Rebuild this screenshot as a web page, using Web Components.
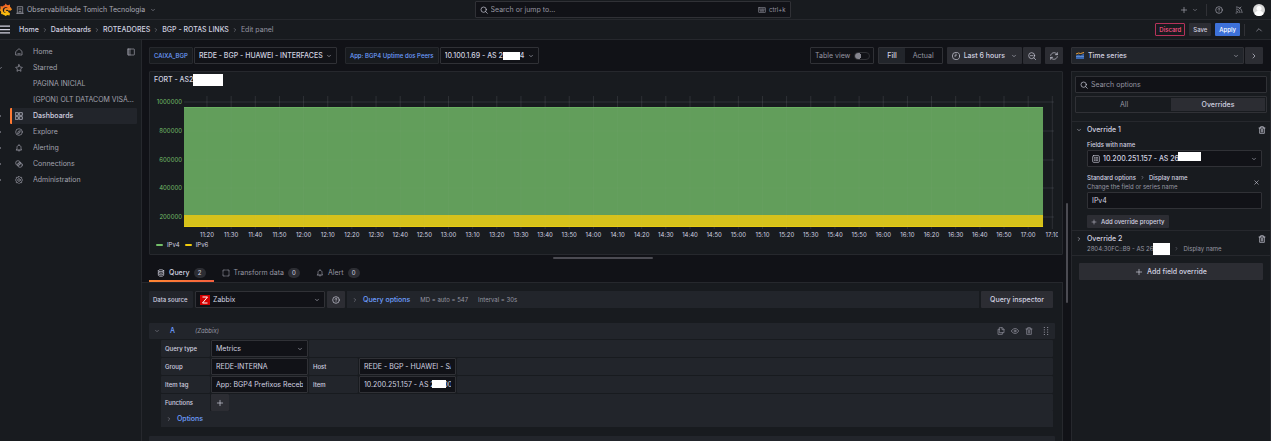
<!DOCTYPE html>
<html lang="pt-BR">
<head>
<meta charset="utf-8">
<title>Edit panel - BGP - ROTAS LINKS</title>
<style>
    html {
        --canvas: #111217;
        --primary: #181b1f;
        --secondary: #22252b;
        --raised: #2c2d33;
        --line: #26282d;
        --input-line: #303136;
        --text: #d2d2e0;
        --text-dim: #9696a2;
        --link: #6e9fff;
        background: var(--canvas);
    }

    body {
        margin: 0;
        font: 7px/10px Inter, sans-serif;
        color: var(--text);
    }
</style>
</head>
<body>
<grafana-app></grafana-app>

<template id="tpl-icon">
    <style>
        :host { display: inline-flex; flex: none; width: 8px; height: 8px; }
        svg { width: 100%; height: 100%; fill: none; stroke: currentColor; stroke-width: 2; stroke-linecap: round; stroke-linejoin: round; }
    </style>
    <svg viewBox="0 0 24 24" aria-hidden="true"></svg>
</template>

<template id="tpl-button">
    <style>
        :host { display: inline-flex; color: var(--text); }
        button {
            flex: 1;
            display: flex;
            align-items: center;
            justify-content: center;
            gap: 4px;
            box-sizing: border-box;
            min-height: 17px;
            margin: 0;
            padding: 0 5px;
            border: 0;
            border-radius: 1px;
            background: var(--raised);
            color: inherit;
            font: inherit;
            font-weight: 500;
            white-space: nowrap;
            cursor: pointer;
        }
        :host([small]) button { min-height: 13px; padding: 0 4px; font-size: 6px; }
        :host([plain]) { color: inherit; }
        :host([plain]) button { min-height: 0; padding: 0; background: none; }
        :host([tone="primary"]) button { background: #3d71d9; color: #fff; }
        :host([tone="danger"]) button { border: 1px solid #b5325a; padding: 0 3px; background: none; color: #ff5286; }
    </style>
    <button type="button"><slot></slot></button>
</template>

<template id="tpl-field">
    <style>
        :host { display: flex; gap: 1px; }
        label {
            flex: none;
            display: flex;
            align-items: center;
            box-sizing: border-box;
            width: var(--label-width, auto);
            padding: 0 4px;
            background: var(--label-background, var(--secondary));
            border: var(--label-border, 0);
            border-radius: 1px;
            color: var(--label-color, inherit);
            font-size: 6px;
            font-weight: 500;
            white-space: nowrap;
        }
        label:empty { display: none; }
        .box {
            flex: 1;
            position: relative;
            display: flex;
            align-items: center;
            gap: 3px;
            box-sizing: border-box;
            min-width: 0;
            height: 17px;
            padding: 0 4px;
            border: 1px solid var(--input-line);
            border-radius: 1px;
            background: var(--canvas);
        }
        .control {
            flex: 1;
            min-width: 0;
            margin: 0;
            padding: 0;
            border: 0;
            outline: 0;
            appearance: none;
            background: none;
            color: inherit;
            font: inherit;
            font-weight: var(--control-weight, 400);
        }
        .control::placeholder { color: var(--text-dim); opacity: 1; }
        ::slotted(.mask) {
            position: absolute;
            background: #fff;
        }
        .arrow { width: 6px; height: 6px; pointer-events: none; }
    </style>
    <label for="control"></label>
    <div class="box"><slot name="prefix"></slot><slot></slot></div>
</template>

<template id="tpl-nav-item">
    <style>
        :host { display: block; }
        a {
            display: grid;
            grid-template-columns: 10px 18px 1fr auto;
            align-items: center;
            height: 16px;
            color: #a2a2ae;
            text-decoration: none;
        }
        .caret { width: 6px; height: 6px; margin-left: -3px; color: var(--text); }
        .body {
            grid-column: 2 / 5;
            display: flex;
            align-items: center;
            gap: 10px;
            height: 16px;
            min-width: 0;
            padding-left: 5px;
            box-sizing: border-box;
        }
        .text { flex: 1; overflow: hidden; text-overflow: ellipsis; white-space: nowrap; }
        :host([child]) .body { padding-left: 23px; }
        :host([active]) .body {
            padding-left: 3px;
            border-left: 2px solid #ff7a33;
            border-radius: 1px;
            background: var(--secondary);
            color: var(--text);
            font-weight: 500;
        }
    </style>
    <a href="#"><span class="caret"></span><span class="body"><span class="text"><slot></slot></span><slot name="end"></slot></span></a>
</template>

<template id="tpl-header">
    <style>
        :host { display: block; background: var(--primary); }
        .row {
            display: grid;
            align-items: center;
            box-sizing: border-box;
            height: 20px;
            border-bottom: 1px solid var(--line);
        }
        .top { grid-template-columns: 1fr 316px 1fr; padding-right: 6px; }
        .crumbs { grid-template-columns: 1fr auto; padding-right: 8px; }
        .org, .end, nav { display: flex; align-items: center; }
        .org { gap: 3px; color: #a9a9b5; }
        .logo { width: 12px; height: 13px; margin-right: 1px; }
        .org .arrow, .arrow { width: 6px; height: 6px; }
        .org .arrow { margin-left: 2px; }
        .end { justify-content: flex-end; color: #a9a9b5; }
        .top .end { gap: 12px; }
        .tools { display: flex; align-items: center; gap: 8px; }
        .rule { width: 1px; height: 12px; background: var(--input-line); }
        .avatar { width: 12px; height: 12px; margin-left: -2px; }
        kbd { display: flex; align-items: center; gap: 3px; font: inherit; font-size: 6px; color: var(--text-dim); }
        nav { gap: 3px; color: var(--text-dim); }
        nav ui-icon { width: 6px; height: 6px; }
        nav a { color: var(--text); font-weight: 500; text-decoration: none; }
        nav .menu { width: 10px; height: 11px; margin-right: 6px; color: var(--text); }
        .crumbs .end { gap: 4px; }
        .crumbs .end > ui-button:last-child { margin-left: 6px; }
    </style>
    <div class="row top">
        <div class="org">
            <svg class="logo" viewBox="0 0 24 26" aria-label="Grafana">
                <defs><linearGradient id="flame" x1="0" y1="1" x2="0" y2="0"><stop offset="0" stop-color="#fbca0a"/><stop offset="1" stop-color="#f05a28"/></linearGradient></defs>
                <path fill="none" stroke="url(#flame)" stroke-width="4" stroke-linejoin="round" d="M18 19c-3 4-9 4-12 1-4-4-3-11 2-13 6-3 13 1 13 7M19 15c-1-4-8-5-9-1-1 4 4 5 5 2"/>
                <path fill="url(#flame)" d="M9 6l2-5 4 4 5-2v6l4 3-3 4-2-5-6-3zM5 7L1 6v5l-1 4 3 3-1 4 5 1 4 3 4-2 4 1 1-5-5 1-8 1-5-6z"/>
            </svg>
            <ui-icon name="building"></ui-icon>
            <span>Observabilidade Tomich Tecnologia</span>
            <ui-icon class="arrow" name="down"></ui-icon>
        </div>
        <ui-field type="text" placeholder="Search or jump to..." aria="Search or jump to">
            <ui-icon slot="prefix" name="search"></ui-icon>
            <kbd><ui-icon name="keyboard"></ui-icon>ctrl+k</kbd>
        </ui-field>
        <div class="end">
            <div class="tools">
                <ui-button plain aria="New"><ui-icon name="plus"></ui-icon><ui-icon class="arrow" name="down"></ui-icon></ui-button>
                <span class="rule"></span>
                <ui-button plain aria="Help"><ui-icon name="help"></ui-icon></ui-button>
            </div>
            <ui-button plain aria="News"><ui-icon name="rss"></ui-icon></ui-button>
            <svg class="avatar" viewBox="0 0 24 24"><circle cx="12" cy="12" r="12" fill="#d8d8d8"/><circle cx="12" cy="9" r="5" fill="#fff"/><path fill="#fff" d="M3 20c1-5 5-6 9-6s8 1 9 6a12 12 0 0 1-18 0z"/></svg>
        </div>
    </div>
    <div class="row crumbs">
        <nav aria-label="Breadcrumbs">
            <ui-button plain aria="Menu"><ui-icon class="menu" name="bars"></ui-icon></ui-button>
            <a href="#">Home</a><ui-icon name="right"></ui-icon>
            <a href="#">Dashboards</a><ui-icon name="right"></ui-icon>
            <a href="#">ROTEADORES</a><ui-icon name="right"></ui-icon>
            <a href="#">BGP - ROTAS LINKS</a><ui-icon name="right"></ui-icon>
            <span>Edit panel</span>
        </nav>
        <div class="end">
            <ui-button small tone="danger">Discard</ui-button>
            <ui-button small>Save</ui-button>
            <ui-button small tone="primary">Apply</ui-button>
            <span class="rule"></span>
            <ui-button plain aria="Collapse"><ui-icon name="up"></ui-icon></ui-button>
        </div>
    </div>
</template>

<template id="tpl-side-nav">
    <style>
        :host { display: block; box-sizing: border-box; padding: 4px 4px 0 0; border-right: 1px solid var(--line); background: var(--primary); }
        .dock { margin-right: 2px; }
    </style>
    <nav aria-label="Main">
        <nav-item icon="home">Home<ui-icon slot="end" class="dock" name="dock"></ui-icon></nav-item>
        <nav-item icon="star" caret="down">Starred</nav-item>
        <nav-item child>PAGINA INICIAL</nav-item>
        <nav-item child>[GPON] OLT DATACOM VISÃO GERAL</nav-item>
        <nav-item icon="apps" caret="right" active>Dashboards</nav-item>
        <nav-item icon="compass" caret="right">Explore</nav-item>
        <nav-item icon="bell" caret="right">Alerting</nav-item>
        <nav-item icon="link" caret="right">Connections</nav-item>
        <nav-item icon="cog" caret="right">Administration</nav-item>
    </nav>
</template>

<template id="tpl-toolbar">
    <style>
        :host { display: flex; gap: 8px; padding: 7px 8px 0 7px; }
        .main { flex: 1; display: flex; gap: 4px; }
        .variable { margin-right: 4px; --label-color: var(--link); --label-background: var(--primary); --label-border: 1px solid var(--line); --control-weight: 500; }
        .space { flex: 1; }
        .toggle, .radio { display: flex; align-items: center; box-sizing: border-box; height: 17px; border: 1px solid var(--input-line); border-radius: 1px; color: var(--text-dim); }
        .toggle { gap: 4px; padding: 0 3px 0 4px; }
        .toggle input { appearance: none; box-sizing: border-box; width: 16px; height: 8px; margin: 0; border: 1px solid var(--input-line); border-radius: 4px; background: radial-gradient(circle at 3px 3px, #85858f 3px, transparent 3px) var(--canvas); }
        .radio label { display: flex; align-items: center; height: 15px; padding: 0 8px; }
        .radio input { appearance: none; position: absolute; margin: 0; }
        .radio label:has(:checked) { background: var(--secondary); color: var(--text); font-weight: 500; }
        .time { display: flex; gap: 1px; }
        .arrow { width: 6px; height: 6px; margin-left: 2px; }
        .viz { flex: none; width: 192px; display: flex; gap: 1px; }
        .viz ui-field { flex: 1; --canvas: var(--secondary); --control-weight: 500; }
        .chart { width: 8px; height: 7px; margin-right: 1px; }
    </style>
    <div class="main">
        <ui-field class="variable" label="CAIXA_BGP" type="select" value="REDE - BGP - HUAWEI - INTERFACES"></ui-field>
        <ui-field class="variable" label="App: BGP4 Uptime dos Peers" type="select" value="10.100.1.69 - AS 200074">
            <span class="mask" style="left:62px;top:4px;width:17px;height:8px"></span>
        </ui-field>
        <span class="space"></span>
        <label class="toggle">Table view <input type="checkbox" role="switch"></label>
        <div class="radio">
            <label><input type="radio" name="size" checked>Fill</label>
            <label><input type="radio" name="size">Actual</label>
        </div>
        <div class="time">
            <ui-button><ui-icon name="clock"></ui-icon>Last 6 hours<ui-icon class="arrow" name="down"></ui-icon></ui-button>
            <ui-button aria="Zoom out"><ui-icon name="zoomout"></ui-icon></ui-button>
        </div>
        <ui-button aria="Refresh"><ui-icon name="sync"></ui-icon></ui-button>
    </div>
    <div class="viz">
        <ui-field type="select" value="Time series" aria="Visualization">
            <svg slot="prefix" class="chart" viewBox="0 0 16 14"><path fill="#3865ab" d="M0 7l5-2 4 2 7-4v11H0z"/><path fill="#84aff1" d="M0 8h16v1H0z"/><path fill="none" stroke="#e8a03a" stroke-width="2" d="M0 4l5-2 4 1 7-2"/></svg>
        </ui-field>
        <ui-button aria="Hide options"><ui-icon name="right"></ui-icon></ui-button>
    </div>
</template>

<template id="tpl-graph">
    <style>
        :host { display: block; box-sizing: border-box; border: 1px solid var(--line); border-radius: 1px; background: var(--primary); }
        h2 { display: flex; align-items: center; height: 16px; margin: 0; padding-left: 4px; font-size: 7px; font-weight: 500; }
        .mask { width: 30px; height: 12px; background: #fff; }
        .plot { display: grid; grid-template-columns: 34px 1fr; height: 152px; padding-right: 4px; }
        svg { display: block; width: 100%; height: 152px; font-size: 6px; overflow: hidden; }
        .y text { fill: #73bf69; text-anchor: end; }
        .x text { fill: var(--text); text-anchor: middle; }
        line { stroke: #ccccdc; stroke-opacity: .1; }
        ul { display: flex; gap: 5px; height: 14px; margin: 0; padding: 0 0 0 6px; list-style: none; font-size: 6px; line-height: 8px; }
        li { display: flex; align-items: center; gap: 4px; height: 10px; }
        i { width: 7px; height: 2px; border-radius: 1px; background: #73bf69; }
        li + li i { background: #f2cc0c; }
    </style>
    <h2>FORT - AS2<span class="mask"></span></h2>
    <div class="plot">
        <svg class="y"></svg>
        <svg class="x"></svg>
    </div>
    <ul><li><i></i>IPv4</li><li><i></i>IPv6</li></ul>
</template>

<template id="tpl-query">
    <style>
        :host { display: block; }
        .tabs { display: flex; height: 18px; padding-left: 7px; border-bottom: 1px solid var(--line); }
        .tabs a { display: flex; align-items: center; gap: 4px; padding: 2px 8px 0; border-bottom: 2px solid transparent; color: var(--text-dim); text-decoration: none; }
        .tabs a.on { border-image: linear-gradient(90deg, #ff8833, #f55f3e) 1; color: var(--text); font-weight: 500; }
        .tabs b { min-width: 4px; padding: 0 4px; border-radius: 5px; background: var(--raised); color: var(--text); font-size: 6px; font-weight: 400; text-align: center; }
        .body { padding: 8px 9px 0 7px; border-right: 1px solid var(--line); background: var(--primary); }
        .source { display: flex; gap: 2px; }
        .source ui-field { flex: none; width: 176px; --label-width: 44px; gap: 2px; }
        .options { flex: 1; display: flex; align-items: center; gap: 10px; padding-left: 5px; background: var(--secondary); color: var(--text-dim); font-size: 6px; }
        .options ui-button { color: var(--link); font-size: 7px; }
        .options ui-icon, .more ui-icon, .head > ui-icon { width: 6px; height: 6px; color: var(--text-dim); }
        .options ui-icon { margin-right: 1px; }
        .inspect { width: 72px; }
        .zabbix { width: 10px; height: 10px; }
        .head { display: flex; align-items: center; height: 16px; margin: 15px -2px 0 0; padding: 0 5px; background: var(--secondary); color: var(--text-dim); border-radius: 1px; }
        .head.next { margin-top: 9px; }
        .head strong { width: 25px; margin-left: 10px; color: var(--link); font-weight: 500; }
        .head em { flex: 1; font-size: 6px; }
        .actions { display: flex; gap: 6px; }
        .actions ui-button:last-child { margin-left: 3px; }
        .rows { display: grid; gap: 1px; margin: 1px 0 0 12px; --label-width: 49px; }
        .rows > div { display: flex; gap: 1px; height: 17px; }
        .rows ui-field { flex: none; width: 147px; }
        .fill { flex: 1; background: var(--secondary); border-radius: 1px; }
        .label { display: flex; align-items: center; box-sizing: border-box; width: 49px; padding: 0 4px; background: var(--secondary); font-size: 6px; font-weight: 500; }
        .add { width: 17px; }
        .rows .more { align-items: center; height: 16px; margin-top: -1px; padding-left: 5px; background: var(--secondary); color: var(--link); }
        .more ui-icon { margin-right: 1px; }
    </style>
    <div class="tabs">
        <a class="on" href="#"><ui-icon name="database"></ui-icon>Query <b>2</b></a>
        <a href="#"><ui-icon name="process"></ui-icon>Transform data <b>0</b></a>
        <a href="#"><ui-icon name="bell"></ui-icon>Alert <b>0</b></a>
    </div>
    <div class="body">
        <div class="source">
            <ui-field label="Data source" type="select" value="Zabbix">
                <svg slot="prefix" class="zabbix" viewBox="0 0 20 20"><path fill="#d40000" d="M0 0h20v20H0z"/><path fill="none" stroke="#fff" stroke-width="2" d="M5 4h10L5 16h10"/></svg>
            </ui-field>
            <ui-button aria="Data source help"><ui-icon name="help"></ui-icon></ui-button>
            <div class="options">
                <ui-button plain><ui-icon name="right"></ui-icon>Query options</ui-button>
                <span>MD = auto = 547</span><span>Interval = 30s</span>
            </div>
            <ui-button class="inspect">Query inspector</ui-button>
        </div>
        <div class="head">
            <ui-icon name="down"></ui-icon><strong>A</strong><em>(Zabbix)</em>
            <div class="actions">
                <ui-button plain aria="Duplicate query"><ui-icon name="copy"></ui-icon></ui-button>
                <ui-button plain aria="Hide response"><ui-icon name="eye"></ui-icon></ui-button>
                <ui-button plain aria="Remove query"><ui-icon name="trash"></ui-icon></ui-button>
                <ui-button plain aria="Drag"><ui-icon name="grip"></ui-icon></ui-button>
            </div>
        </div>
        <div class="rows">
            <div><ui-field label="Query type" type="select" value="Metrics"></ui-field><span class="fill"></span></div>
            <div>
                <ui-field label="Group" type="text" value="REDE-INTERNA"></ui-field>
                <ui-field label="Host" type="text" value="REDE - BGP - HUAWEI - SAO PAULO"></ui-field>
                <span class="fill"></span>
            </div>
            <div>
                <ui-field label="Item tag" type="text" value="App: BGP4 Prefixos Recebidos"></ui-field>
                <ui-field label="Item" type="text" value="10.200.251.157 - AS 2000000">
                    <span class="mask" style="left:72px;top:3px;width:14px;height:8px"></span>
                </ui-field>
                <span class="fill"></span>
            </div>
            <div><span class="label">Functions</span><ui-button class="add" aria="Add function"><ui-icon name="plus"></ui-icon></ui-button><span class="fill"></span></div>
            <div class="more"><ui-button plain><ui-icon name="right"></ui-icon>Options</ui-button></div>
        </div>
        <div class="head next"></div>
    </div>
</template>

<template id="tpl-options">
    <style>
        :host { display: block; box-sizing: border-box; border: 1px solid var(--line); border-bottom: 0; background: var(--primary); }
        .top { display: grid; gap: 3px; padding: 4px 3px 8px; border-bottom: 1px solid var(--line); }
        .radio { display: grid; grid-template-columns: 1fr 1fr; padding: 1px; border: 1px solid var(--input-line); border-radius: 1px; color: var(--text-dim); text-align: center; line-height: 13px; }
        .radio input { appearance: none; position: absolute; margin: 0; }
        .radio label:has(:checked) { background: var(--raised); color: var(--text); font-weight: 500; }
        section { display: grid; grid-template-columns: 8px 1fr 8px; gap: 0 4px; padding: 3px 4px 2px 3px; border-bottom: 1px solid var(--line); }
        section > * { grid-column: 2 / 4; min-width: 0; }
        section > .caret { grid-column: 1; width: 6px; height: 6px; margin: 2px 0 0 1px; }
        h3 { grid-column: 2; margin: 0; font-size: 7px; font-weight: 500; }
        section > .bin { grid-column: 3; }
        .inner { display: grid; margin-right: 4px; }
        .name { margin-top: 5px; font-size: 6px; font-weight: 500; }
        .small { width: 5px; height: 5px; margin: 0 4px; }
        .close { width: 7px; height: 7px; }
        .prop { display: flex; align-items: center; justify-content: space-between; margin: 6px 2px 1px 0; font-size: 6px; line-height: 9px; }
        .prop strong { font-weight: 500; }
        .prop p, .sub { margin: 0; color: var(--text-dim); }
        .add { justify-self: start; margin-top: 6px; }
        .add ui-icon { width: 6px; height: 6px; }
        .sub { display: flex; align-items: center; height: 9px; font-size: 6px; }
        .sub .mask { flex: none; width: 17px; height: 12px; background: #fff; }
        .all { display: flex; margin: 7px 7px 0; }
    </style>
    <div class="top">
        <ui-field type="text" placeholder="Search options" aria="Search options"><ui-icon slot="prefix" name="search"></ui-icon></ui-field>
        <div class="radio">
            <label><input type="radio" name="view">All</label>
            <label><input type="radio" name="view" checked>Overrides</label>
        </div>
    </div>
    <section>
        <ui-icon class="caret" name="down"></ui-icon><h3>Override 1</h3>
        <ui-button class="bin" plain aria="Remove override"><ui-icon name="trash"></ui-icon></ui-button>
        <div class="inner">
            <span class="name">Fields with name</span>
            <ui-field type="select" value="10.200.251.157 - AS 26" aria="Fields with name" style="--control-weight:500">
                <ui-icon slot="prefix" name="field"></ui-icon>
                <span class="mask" style="left:90px;top:1px;width:23px;height:9px"></span>
            </ui-field>
            <div class="prop">
                <div><strong>Standard options<ui-icon class="small" name="right"></ui-icon>Display name</strong><p>Change the field or series name</p></div>
                <ui-button plain aria="Remove property"><ui-icon class="close" name="times"></ui-icon></ui-button>
            </div>
            <ui-field type="text" value="IPv4" aria="Display name"></ui-field>
            <ui-button class="add" small><ui-icon name="plus"></ui-icon>Add override property</ui-button>
        </div>
    </section>
    <section>
        <ui-icon class="caret" name="right"></ui-icon><h3>Override 2</h3>
        <ui-button class="bin" plain aria="Remove override"><ui-icon name="trash"></ui-icon></ui-button>
        <div class="sub">2804:30FC::B9 - AS 26<span class="mask"></span><ui-icon class="small" name="right"></ui-icon>Display name</div>
    </section>
    <ui-button class="all"><ui-icon name="plus"></ui-icon>Add field override</ui-button>
</template>

<template id="tpl-app">
    <style>
        :host { display: grid; grid-template: auto 1fr / 142px 1fr; height: 100vh; overflow: hidden; background: var(--canvas); }
        app-header { grid-column: 1 / 3; }
        main { display: flex; flex-direction: column; min-width: 0; min-height: 0; }
        .split { flex: 1; display: grid; grid-template-columns: 1fr 8px 200px; min-height: 0; }
        .left { min-width: 0; padding-top: 7px; overflow: hidden; }
        graph-panel { margin-left: 7px; }
        hr { width: 100px; height: 2px; margin: 2px auto 5px; border: 0; border-radius: 1px; background: #4b4b52; }
        .bar { align-self: center; justify-self: center; width: 2px; height: 100px; border-radius: 1px; background: #4b4b52; }
        options-pane { margin-top: 7px; }
    </style>
    <app-header></app-header>
    <side-nav></side-nav>
    <main>
        <panel-toolbar></panel-toolbar>
        <div class="split">
            <div class="left">
                <graph-panel></graph-panel>
                <hr>
                <query-editor></query-editor>
            </div>
            <span class="bar"></span>
            <options-pane></options-pane>
        </div>
    </main>
</template>

<script>
    (function () {
        const ICONS = {
            down: '<path d="M6 9l6 6 6-6"/>',
            up: '<path d="M5 15l7-7 7 7"/>',
            right: '<path d="M9 6l6 6-6 6"/>',
            plus: '<path d="M12 4v16M4 12h16"/>',
            times: '<path d="M6 6l12 12M18 6L6 18"/>',
            search: '<circle cx="11" cy="11" r="8"/><path d="M17 17l5 5"/>',
            zoomout: '<circle cx="11" cy="11" r="9"/><path d="M18 18l5 5M7 11h8"/>',
            bars: '<path stroke-width="3" d="M0 4h24M0 12h24M0 20h24"/>',
            building: '<path d="M4 22V2h16v20M2 22h20M9 7h1M14 7h1M9 11h1M14 11h1M9 22v-6h6v6"/>',
            keyboard: '<rect x="1" y="5" width="22" height="14" rx="2"/><path d="M5 9h1M9 9h1M13 9h1M17 9h2M5 12h14M7 15h10"/>',
            help: '<circle cx="12" cy="12" r="10"/><path d="M9 10c0-4 6-4 6-1 0 2-3 2-3 4M12 17v0"/>',
            rss: '<path d="M4 3c10 0 17 7 17 17M4 9c6 0 11 5 11 11M4 15c3 0 5 2 5 5M3 21h2M18 3l-5 5"/>',
            home: '<path d="M3 10l9-8 9 8v11H3zM8 16c2 3 6 3 8 0"/>',
            dock: '<rect x="2" y="3" width="20" height="18" rx="1"/><path d="M9 3v18M5 3v18"/>',
            star: '<path d="M12 2l3 7 7 1-5 5 1 7-6-4-6 4 1-7-5-5 7-1z"/>',
            apps: '<path d="M2 2h8v8H2zM14 2h8v8h-8zM2 14h8v8H2zM14 14h8v8h-8z"/>',
            compass: '<circle cx="12" cy="12" r="10"/><path d="M8 16l2-6 6-2-2 6z"/>',
            bell: '<path d="M4 18h16l-2-3v-5c0-8-12-8-12 0v5zM12 2v2M9 18c0 5 6 5 6 0"/>',
            link: '<circle cx="9" cy="9" r="7"/><circle cx="15" cy="15" r="7"/><path d="M8 12l4-4M12 16l4-4"/>',
            cog: '<path d="M12 1l3 3h5v5l3 3-3 3v5h-5l-3 3-3-3H4v-5l-3-3 3-3V4h5z"/><circle cx="12" cy="12" r="4"/>',
            clock: '<circle cx="12" cy="12" r="11"/><path d="M12 6v6H8"/>',
            sync: '<path d="M2 10c2-10 16-11 20-2M22 2v6h-6M22 14c-2 10-16 11-20 2M2 22v-6h6"/>',
            database: '<ellipse cx="12" cy="5" rx="8" ry="3"/><path d="M4 5v14c0 4 16 4 16 0V5M4 10c0 4 16 4 16 0M4 15c0 4 16 4 16 0"/>',
            process: '<path d="M3 8V3h5M16 3h5v5M21 16v5h-5M8 21H3v-5M11 3h2M3 11v2M21 11v2M11 21h2"/>',
            copy: '<path d="M8 2h8l5 5v10H8zM15 2v6h6M16 17v5H3V7h5"/>',
            eye: '<path d="M1 12c5-10 17-10 22 0-5 10-17 10-22 0z"/><circle cx="12" cy="12" r="3"/>',
            trash: '<path d="M3 6h18M5 6v16h14V6M8 6V2h8v4M10 10v8M14 10v8"/>',
            grip: '<path stroke-width="3" stroke-linecap="butt" stroke-dasharray="3 4" d="M7 0v24M17 0v24"/>',
            field: '<rect x="2" y="2" width="20" height="20" rx="3"/><path d="M7 8h2M12 8h5M7 12h2M12 12h5M7 16h2M12 16h5"/>'
        };

        // Clones a template into an open shadow root; subclasses fill in the rest.
        class Base extends HTMLElement {
            constructor() {
                super();
                const tpl = document.getElementById('tpl-' + this.constructor.tpl);
                this.attachShadow({ mode: 'open' }).appendChild(tpl.content.cloneNode(true));
            }
            $(selector) {
                return this.shadowRoot.querySelector(selector);
            }
        }

        function define(name, tpl, setup) {
            customElements.define(name, class extends Base {
                static get tpl() {
                    return tpl;
                }
                connectedCallback() {
                    if (setup && !this.ready) {
                        this.ready = true;
                        setup.call(this);
                    }
                }
            });
        }

        function icon(name, className) {
            const el = document.createElement('ui-icon');
            el.setAttribute('name', name);
            el.className = className || '';
            return el;
        }

        define('ui-icon', 'icon', function () {
            this.$('svg').innerHTML = ICONS[this.getAttribute('name')];
        });

        define('ui-button', 'button', function () {
            if (this.hasAttribute('aria')) {
                this.$('button').setAttribute('aria-label', this.getAttribute('aria'));
            }
        });

        define('ui-field', 'field', function () {
            const isSelect = this.getAttribute('type') === 'select';
            const value = this.getAttribute('value') || '';
            const control = document.createElement(isSelect ? 'select' : 'input');
            control.id = 'control';
            control.className = 'control';
            if (isSelect) {
                control.add(new Option(value));
            } else {
                control.type = 'text';
                control.value = value;
                control.placeholder = this.getAttribute('placeholder') || '';
            }
            if (this.hasAttribute('aria')) {
                control.setAttribute('aria-label', this.getAttribute('aria'));
            }
            this.$('label').textContent = this.getAttribute('label') || '';
            this.$('slot:not([name])').before(control);
            if (isSelect) {
                this.$('.box').appendChild(icon('down', 'arrow'));
            }
        });

        define('nav-item', 'nav-item', function () {
            if (this.hasAttribute('icon')) {
                this.$('.body').prepend(icon(this.getAttribute('icon')));
            }
            if (this.hasAttribute('caret')) {
                this.$('.caret').replaceWith(icon(this.getAttribute('caret'), 'caret'));
            }
        });

        define('graph-panel', 'graph', function () {
            const TOP = 8, BOTTOM = 139, SPAN = 875;
            const pct = x => (x / SPAN * 100).toFixed(3) + '%';
            const yOf = v => 129 - (v - 200000) / 800000 * 115;
            let axis = '';
            let grid = '';
            let labels = '';
            for (let v = 200000; v <= 1000000; v += 200000) {
                const y = Math.round(yOf(v));
                axis += `<text x="32" y="${y + 2}">${v}</text>`;
                grid += `<line x1="0" x2="${pct(871)}" y1="${y}" y2="${y}"/>`;
            }
            for (let i = 0; i <= 35; i++) {
                const minutes = 11 * 60 + 20 + i * 10;
                const x = pct(23 + i * 24.18);
                const time = Math.floor(minutes / 60) + ':' + String(minutes % 60).padStart(2, '0');
                grid += `<line x1="${x}" x2="${x}" y1="${TOP}" y2="${BOTTOM + 2}"/>`;
                labels += `<text x="${x}" y="149">${time}</text>`;
            }
            const end = pct(860);
            this.$('.y').innerHTML = axis;
            this.$('.x').innerHTML = grid +
                `<rect width="${end}" y="19" height="109" fill="#629e5b"/>` +
                `<rect width="${end}" y="19" height="1" fill="#6ab161"/>` +
                `<rect width="${end}" y="127" height="12" fill="#d6c21b"/>` +
                `<rect width="${end}" y="138" height="1" fill="#e8cc12"/>` +
                `<g opacity=".3">${grid}</g>` + labels;
        });

        define('app-header', 'header');
        define('side-nav', 'side-nav');
        define('panel-toolbar', 'toolbar');
        define('query-editor', 'query');
        define('options-pane', 'options');
        define('grafana-app', 'app');
    })();
</script>
</body>
</html>
